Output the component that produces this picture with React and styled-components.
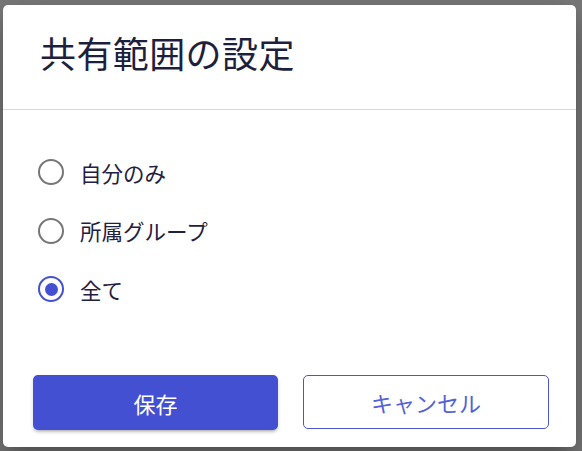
import styled, { createGlobalStyle } from "styled-components";

const GlobalStyle = createGlobalStyle`
    html, body {
        margin: 0;
        padding: 0;
        height: 100%;
    }
    body {
        background-color: #7a7a7a;
        font-family: "Noto Sans CJK JP", "Noto Sans", sans-serif;
    }
    #root {
        height: 100%;
    }
`

const Backdrop = styled.div`
    width: 582px;
    height: 451px;
    box-sizing: border-box;
    padding: 5px 6px 4px 3px;
    display: flex;
    overflow: hidden;
`

const Dialog = styled.div`
    flex: 1;
    display: flex;
    flex-direction: column;
    background-color: #ffffff;
    border-radius: 5px;
    box-shadow: 0 11px 15px -7px rgba(0,0,0,0.2), 0 24px 38px 3px rgba(0,0,0,0.14), 0 9px 46px 8px rgba(0,0,0,0.12);
`

const Header = styled.div`
    height: 102px;
    display: flex;
    align-items: center;
    padding-left: 37px;
    padding-bottom: 2px;
    border-bottom: 1px solid #d9d9d9;
`

const Title = styled.h2`
    margin: 0 0 8px 0;
    font-size: 36px;
    font-weight: 400;
    color: #1d1f3d;
    letter-spacing: 0.4px;
`

const Body = styled.div`
    flex: 1;
    display: flex;
    flex-direction: column;
    padding: 33px 30px 0 35px;
`

const Option = styled.label`
    height: 58.5px;
    display: flex;
    align-items: center;
    gap: 16px;
    cursor: pointer;
`

const Radio = styled.span`
    width: 26px;
    height: 26px;
    box-sizing: border-box;
    border-radius: 50%;
    border: 2.5px solid ${props => props.$checked ? "#4450d2" : "#767676"};
    display: flex;
    align-items: center;
    justify-content: center;
    &::after {
        content: "";
        width: 13px;
        height: 13px;
        border-radius: 50%;
        background-color: #4450d2;
        display: ${props => props.$checked ? "block" : "none"};
    }
`

const OptionText = styled.span`
    font-size: 21.5px;
    color: #1f2140;
`

const Footer = styled.div`
    display: grid;
    grid-template-columns: 245px 246px;
    gap: 25px;
    padding: 0 27px 17px 30px;
`

const SaveButton = styled.button`
    height: 55px;
    border: none;
    border-radius: 5px;
    background-color: #4450d2;
    color: #ffffff;
    font-family: inherit;
    font-size: 22px;
    box-shadow: 0 3px 3px -2px rgba(0,0,0,0.25), 0 2px 4px 0 rgba(0,0,0,0.14);
    cursor: pointer;
`

const CancelButton = styled.button`
    height: 54px;
    border: 1px solid #4a55d4;
    border-radius: 5px;
    background-color: #ffffff;
    color: #5462d6;
    font-family: inherit;
    font-size: 22px;
    cursor: pointer;
`

const options = [
    { label: "自分のみ", checked: false },
    { label: "所属グループ", checked: false },
    { label: "全て", checked: true },
]

export default function App() {
    return (
        <>
            <GlobalStyle />
            <Backdrop>
                <Dialog>
                    <Header>
                        <Title>共有範囲の設定</Title>
                    </Header>
                    <Body>
                        {options.map(o => (
                            <Option key={o.label}>
                                <Radio $checked={o.checked} />
                                <OptionText>{o.label}</OptionText>
                            </Option>
                        ))}
                    </Body>
                    <Footer>
                        <SaveButton>保存</SaveButton>
                        <CancelButton>キャンセル</CancelButton>
                    </Footer>
                </Dialog>
            </Backdrop>
        </>
    )
}
